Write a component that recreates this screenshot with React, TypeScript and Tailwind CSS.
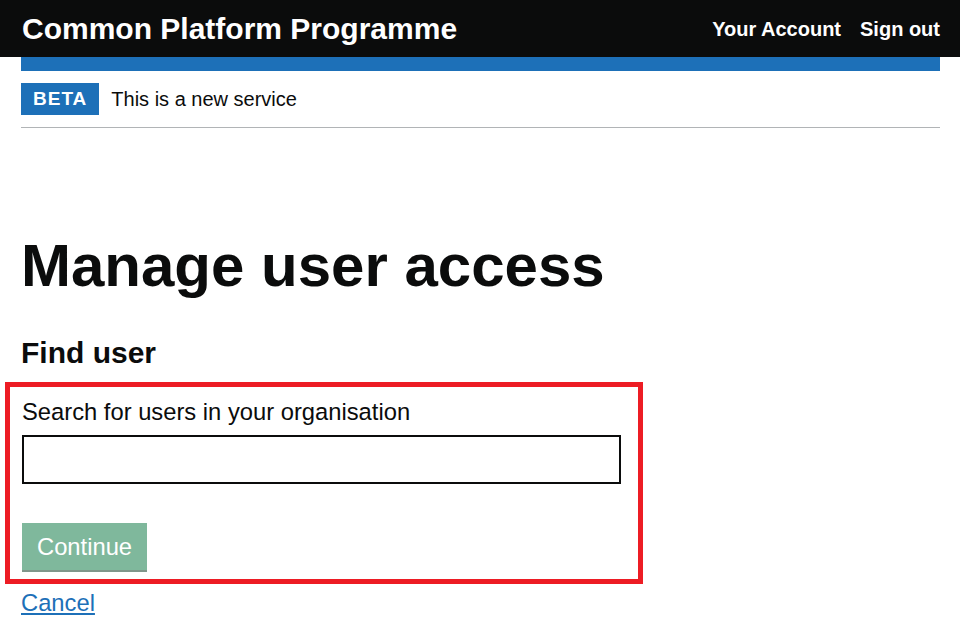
export default function App() {
  return (
    <div className="min-h-[640px] bg-white font-['Liberation_Sans',Arial,sans-serif] text-[#0b0c0c]">
      {/* Service header */}
      <header className="flex h-[57px] items-center justify-between bg-[#0b0c0c] pl-[22px] pr-[20px] text-white">
        <span className="text-[30px] font-bold leading-[30px]">Common Platform Programme</span>
        <nav className="flex gap-[19px] text-[20px] font-bold leading-[20px]">
          <a href="#">Your Account</a>
          <a href="#">Sign out</a>
        </nav>
      </header>

      <div className="ml-[21px] mr-[20px]">
        <div className="h-[14px] bg-[#1d70b8]" />

        {/* Phase banner */}
        <div className="flex items-center gap-[12px] border-b border-[#b1b4b6] py-[12px]">
          <strong className="flex h-[32px] items-center bg-[#1d70b8] px-[12px] text-[19px] font-bold tracking-[1px] text-white">
            BETA
          </strong>
          <span className="text-[20px] leading-[24px]">This is a new service</span>
        </div>

        <h1 className="mt-[107px] text-[60px] font-bold leading-[62px]">Manage user access</h1>
        <h2 className="mt-[37px] text-[30px] font-bold leading-[38px]">Find user</h2>

        {/* Highlighted search form */}
        <div className="-ml-[16px] mt-[10px] w-[638px] border-[5px] border-[#ed1c24] pb-[9px] pl-[12px] pr-[17px] pt-[9px]">
          <label htmlFor="search" className="block text-[23.75px] leading-[31px]">
            Search for users in your organisation
          </label>
          <input
            id="search"
            type="text"
            className="mt-[8px] block h-[49px] w-[599px] border-2 border-[#0b0c0c] bg-white px-[6px] text-[23.75px] outline-none"
          />
          <button
            type="button"
            disabled
            className="mt-[39px] flex h-[47px] items-center bg-[#7fb89c] px-[15px] text-[23.75px] leading-[28px] text-white shadow-[0_2px_0_#80968b]"
          >
            Continue
          </button>
        </div>

        <a href="#" className="mt-[3px] inline-block text-[23.75px] leading-[31px] text-[#1d70b8] underline">
          Cancel
        </a>
      </div>
    </div>
  );
}
